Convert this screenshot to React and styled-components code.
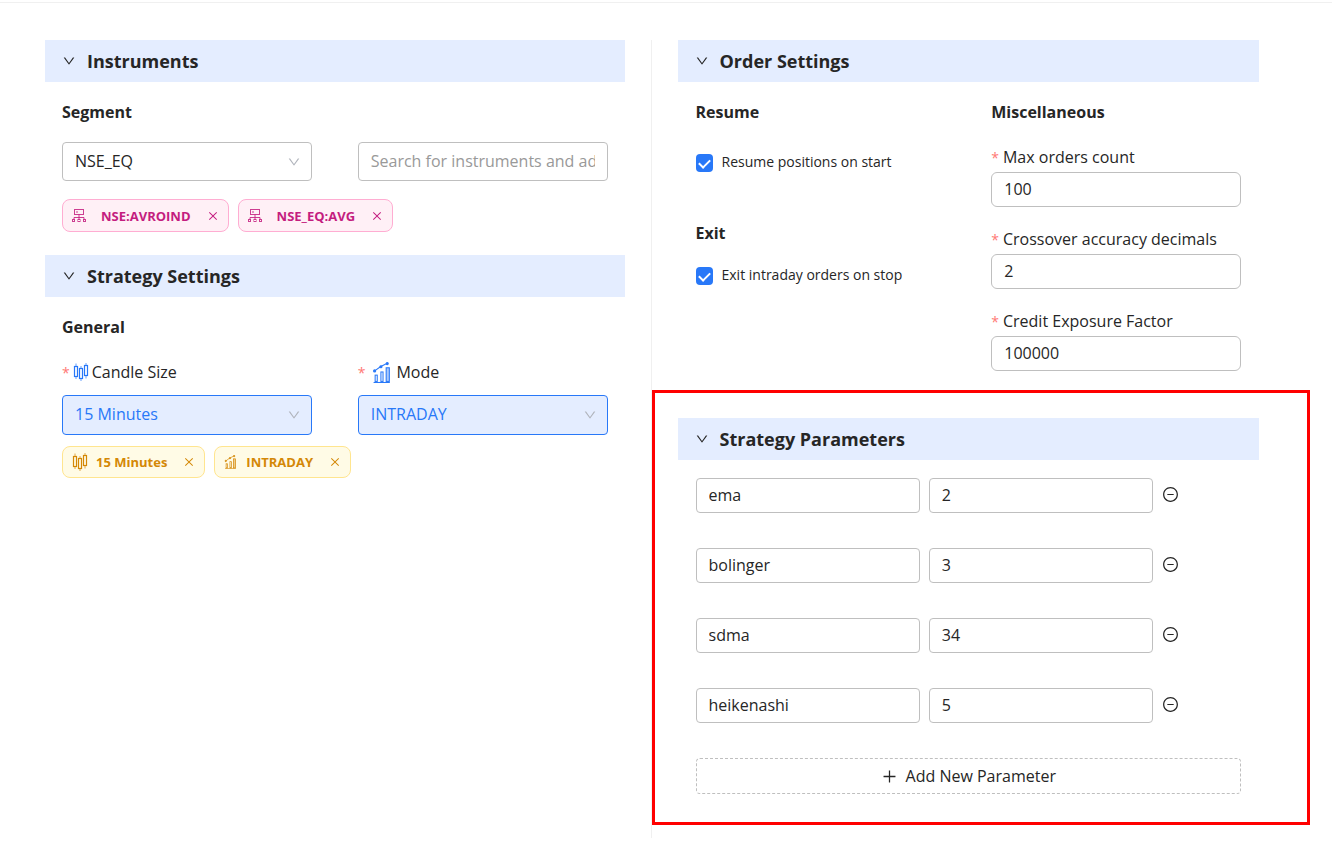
import React, { useState } from "react";
import styled, { createGlobalStyle } from "styled-components";
import {
  AiOutlineDown,
  AiOutlineClose,
  AiOutlineMinusCircle,
  AiOutlinePlus,
} from "react-icons/ai";

const GlobalStyle = createGlobalStyle`
  * {
    box-sizing: border-box;
  }

  body {
    margin: 0;
    background: #fff;
    color: #262626;
    font-family: "Open Sans", "Noto Sans", sans-serif;
    font-size: 16px;
  }

  input, select, button {
    font-family: inherit;
    color: inherit;
  }
`;

// candles
const CandleIcon = () => (
  <svg width="16" height="20" viewBox="0 0 16 20" fill="none" stroke="currentColor" aria-hidden="true">
    <rect x="1.5" y="4.5" width="3" height="10" strokeWidth="1.2" />
    <rect x="6.5" y="6.5" width="3" height="10" strokeWidth="1.2" />
    <rect x="11.5" y="3.5" width="3" height="10" strokeWidth="1.2" />
    <path d="M3 1.5v3M3 14.5v2.5M8 4v2.5M8 16.5v2.5M13 1v2.5M13 13.5v3" strokeOpacity="0.7" />
  </svg>
);

// growing bars with a trend line
const ChartIcon = ({ size = 21 }) => (
  <svg width={size} height={size} viewBox="0 0 20 20" fill="none" stroke="currentColor" aria-hidden="true">
    <rect x="3" y="12.5" width="2" height="6" />
    <rect x="8.5" y="9.5" width="2" height="9" />
    <rect x="13.5" y="5.5" width="3" height="13" fill="currentColor" fillOpacity="0.4" />
    <path d="M2.5 8.5L8 4.5L14 1.5" />
    <path d="M1.5 19.5h15.5" />
    <circle cx="2.5" cy="8.5" r="1" fill="currentColor" />
    <circle cx="8.5" cy="4.5" r="1" fill="currentColor" />
    <circle cx="14.5" cy="1.5" r="1" fill="currentColor" />
  </svg>
);

// exchange tree
const NetworkIcon = () => (
  <svg width="14" height="14" viewBox="0 0 14 14" fill="none" stroke="currentColor" strokeOpacity="0.85" aria-hidden="true">
    <rect x="2.5" y="0.5" width="9" height="5" />
    <path d="M4 3h2M7 5.5v5M2 10.5v-2h10v2" />
    <rect x="0.5" y="10.5" width="2" height="2" />
    <rect x="6" y="10.5" width="2" height="2" />
    <rect x="11.5" y="10.5" width="2" height="2" />
  </svg>
);

const Section = ({ title, children }) => (
  <section>
    <SectionHeader type="button">
      <AiOutlineDown size={14} />
      <h2>{title}</h2>
    </SectionHeader>
    {children}
  </section>
);

const Select = ({ id, options, active, ...rest }) => (
  <SelectBox $active={active}>
    <select id={id} {...rest}>
      {options.map((option) => (
        <option key={option}>{option}</option>
      ))}
    </select>
    <AiOutlineDown size={14} />
  </SelectBox>
);

const numberFields = [
  { id: "max-orders", label: "Max orders count", value: "100" },
  { id: "crossover", label: "Crossover accuracy decimals", value: "2" },
  { id: "exposure", label: "Credit Exposure Factor", value: "100000" },
];

const initialParameters = [
  { id: 1, name: "ema", value: "2" },
  { id: 2, name: "bolinger", value: "3" },
  { id: 3, name: "sdma", value: "34" },
  { id: 4, name: "heikenashi", value: "5" },
];

const App = () => {
  const [instruments, setInstruments] = useState(["NSE:AVROIND", "NSE_EQ:AVG"]);
  const [parameters, setParameters] = useState(initialParameters);

  const addParameter = () =>
    setParameters([...parameters, { id: Date.now(), name: "", value: "" }]);

  return (
    <>
      <GlobalStyle />
      <Page>
        <LeftColumn>
          <Section title="Instruments">
            <SectionBody>
              <SubTitle>Segment</SubTitle>
              <InstrumentGrid>
                <Select aria-label="Segment" options={["NSE_EQ", "NSE_FO"]} />
                <TextInput
                  $tall
                  type="text"
                  aria-label="Instruments"
                  placeholder="Search for instruments and add"
                />
              </InstrumentGrid>
              <TagRow>
                {instruments.map((name) => (
                  <Tag key={name} $pink>
                    <NetworkIcon />
                    <span>{name}</span>
                    <button
                      type="button"
                      aria-label={`Remove ${name}`}
                      onClick={() => setInstruments(instruments.filter((i) => i !== name))}
                    >
                      <AiOutlineClose size={12} />
                    </button>
                  </Tag>
                ))}
              </TagRow>
            </SectionBody>
          </Section>
          <Section title="Strategy Settings">
            <SectionBody>
              <SubTitle>General</SubTitle>
              <GeneralGrid>
                <div>
                  <IconLabel htmlFor="candle">
                    <Star>*</Star>
                    <CandleIcon />
                    Candle Size
                  </IconLabel>
                  <Select id="candle" active options={["15 Minutes", "30 Minutes"]} />
                </div>
                <div>
                  <IconLabel htmlFor="mode" $wide>
                    <Star>*</Star>
                    <ChartIcon />
                    Mode
                  </IconLabel>
                  <Select id="mode" active options={["INTRADAY", "DELIVERY"]} />
                </div>
              </GeneralGrid>
              <TagRow $near>
                <Tag>
                  <CandleIcon />
                  <span>15 Minutes</span>
                  <button type="button" aria-label="Remove 15 Minutes">
                    <AiOutlineClose size={12} />
                  </button>
                </Tag>
                <Tag>
                  <ChartIcon size={14} />
                  <span>INTRADAY</span>
                  <button type="button" aria-label="Remove INTRADAY">
                    <AiOutlineClose size={12} />
                  </button>
                </Tag>
              </TagRow>
            </SectionBody>
          </Section>
        </LeftColumn>

        <RightColumn>
          <OrderArea>
            <Section title="Order Settings">
              <OrderBody>
                <div>
                  <SubTitle>Resume</SubTitle>
                  <CheckLabel $first>
                    <Checkbox type="checkbox" defaultChecked />
                    <span>Resume positions on start</span>
                  </CheckLabel>
                  <SubTitle>Exit</SubTitle>
                  <CheckLabel>
                    <Checkbox type="checkbox" defaultChecked />
                    <span>Exit intraday orders on stop</span>
                  </CheckLabel>
                </div>
                <div>
                  <SubTitle>Miscellaneous</SubTitle>
                  <FieldList>
                    {numberFields.map((field) => (
                      <div key={field.id}>
                        <FieldLabel htmlFor={field.id}>
                          <Star>*</Star>
                          {field.label}
                        </FieldLabel>
                        <TextInput $round id={field.id} type="text" defaultValue={field.value} />
                      </div>
                    ))}
                  </FieldList>
                </div>
              </OrderBody>
            </Section>
          </OrderArea>
          <Highlight>
            <Section title="Strategy Parameters">
              <ParameterList>
                {parameters.map((param) => (
                  <ParameterRow key={param.id}>
                    <TextInput type="text" aria-label="Parameter name" defaultValue={param.name} />
                    <TextInput type="text" aria-label="Parameter value" defaultValue={param.value} />
                    <IconButton
                      type="button"
                      aria-label="Remove parameter"
                      onClick={() => setParameters(parameters.filter((p) => p.id !== param.id))}
                    >
                      <AiOutlineMinusCircle size={17} />
                    </IconButton>
                  </ParameterRow>
                ))}
                <AddButton type="button" onClick={addParameter}>
                  <AiOutlinePlus size={17} />
                  Add New Parameter
                </AddButton>
              </ParameterList>
            </Section>
          </Highlight>
        </RightColumn>
      </Page>
    </>
  );
};

export default App;

const Page = styled.main`
  display: grid;
  grid-template-columns: minmax(0, 1fr) minmax(0, 1fr);
  margin-top: 2px;
  border-top: 1px solid #f0f0f0;
  padding: 37px 22px 16px 45px;
`;

const LeftColumn = styled.div`
  display: flex;
  flex-direction: column;
  gap: 23px;
  padding-right: 26px;
  border-right: 1px solid #f0f0f0;
  margin-right: 26px;
`;

const RightColumn = styled.div`
  margin-left: -26px;
  padding-bottom: 13px;
`;

const OrderArea = styled.div`
  padding: 0 51px 0 26px;
`;

const Highlight = styled.div`
  margin-top: 19px;
  border: 3px solid #ff0000;
  padding: 25px 48px 28px 23px;
`;

const SectionHeader = styled.button`
  display: flex;
  align-items: center;
  gap: 11px;
  width: 100%;
  height: 42px;
  padding: 0 17px;
  border: none;
  background: #e4edff;
  text-align: left;

  h2 {
    margin: 0;
    font-size: 18px;
    line-height: 24px;
    font-weight: 700;
  }
`;

const SectionBody = styled.div`
  padding: 18px 17px 0;
`;

const SubTitle = styled.h3`
  margin: 0;
  font-size: 16px;
  line-height: 24px;
  font-weight: 700;
`;

const InstrumentGrid = styled.div`
  display: grid;
  grid-template-columns: 1fr 1fr;
  gap: 46px;
  margin-top: 18px;
`;

const GeneralGrid = styled(InstrumentGrid)`
  margin-top: 17px;
`;

const SelectBox = styled.div`
  position: relative;

  select {
    appearance: none;
    display: block;
    width: 100%;
    height: ${({ $active }) => ($active ? "40px" : "39px")};
    padding: 0 12px 2px;
    border: 1px solid ${({ $active }) => ($active ? "#2878f8" : "#bfbfbf")};
    border-radius: 4px;
    background: ${({ $active }) => ($active ? "#e4edff" : "#fff")};
    color: ${({ $active }) => ($active ? "#2878f8" : "#262626")};
    font-size: 16px;
  }

  svg {
    position: absolute;
    top: 13px;
    right: 11px;
    color: #b0b4bc;
    pointer-events: none;
  }
`;

const TextInput = styled.input`
  display: block;
  width: 100%;
  height: ${({ $tall }) => ($tall ? "39px" : "35px")};
  padding: 0 12px 2px;
  border: 1px solid #bfbfbf;
  border-radius: ${({ $round }) => ($round ? "6px" : "4px")};
  background: #fff;
  font-size: 16px;

  &::placeholder {
    color: #999;
  }
`;

const TagRow = styled.div`
  display: flex;
  flex-wrap: wrap;
  gap: 9px;
  margin-top: ${({ $near }) => ($near ? "11px" : "18px")};
`;

const Tag = styled.div`
  display: flex;
  align-items: center;
  height: ${({ $pink }) => ($pink ? "33px" : "32px")};
  padding: 0 9px;
  border: 1px solid ${({ $pink }) => ($pink ? "#ffadd2" : "#ffe58f")};
  border-radius: 8px;
  background: ${({ $pink }) => ($pink ? "#fff0f6" : "#fffbe6")};
  color: ${({ $pink }) => ($pink ? "#c41d7f" : "#d48806")};
  font-size: 13px;
  font-weight: 700;

  span {
    margin-left: ${({ $pink }) => ($pink ? "15px" : "8px")};
  }

  button {
    display: flex;
    margin-left: 16px;
    padding: 0;
    border: none;
    background: none;
  }
`;

const Star = styled.span`
  color: #ff7875;
  font-size: 14px;
`;

const FieldLabel = styled.label`
  display: flex;
  align-items: center;
  gap: 4px;
  height: 30px;
  font-size: 16px;
`;

const IconLabel = styled(FieldLabel)`
  height: 32px;
  margin-bottom: 7px;
  gap: 3px;

  svg {
    color: #2878f8;
    margin: ${({ $wide }) => ($wide ? "0 0 0 4px" : "0")};
  }
`;

const OrderBody = styled.div`
  display: grid;
  grid-template-columns: 1fr 1fr;
  gap: 46px;
  padding: 18px 18px 0;
`;

const CheckLabel = styled.label`
  display: flex;
  align-items: center;
  gap: 9px;
  height: 22px;
  margin: ${({ $first }) => ($first ? "28px 0 47px" : "20px 0 0")};
  font-size: 14px;

  span {
    padding-bottom: 3px;
  }
`;

const Checkbox = styled.input`
  appearance: none;
  width: 17px;
  height: 18px;
  margin: 0;
  border-radius: 4px;
  background: #2878f8;
  display: grid;
  place-items: center;

  &:checked::before {
    content: "";
    width: 5px;
    height: 9px;
    border: solid #fff;
    border-width: 0 2px 2px 0;
    transform: translateY(-1px) rotate(45deg);
  }
`;

const FieldList = styled.div`
  display: flex;
  flex-direction: column;
  gap: 17px;
  margin-top: 18px;
`;

const ParameterList = styled.div`
  display: flex;
  flex-direction: column;
  gap: 35px;
  padding: 18px 18px 0;
`;

const ParameterRow = styled.div`
  display: grid;
  grid-template-columns: 1fr 1fr 79px;
  gap: 9px;
`;

const IconButton = styled.button`
  display: flex;
  align-items: center;
  justify-self: start;
  padding: 0 0 2px;
  border: none;
  background: none;
`;

const AddButton = styled.button`
  display: flex;
  align-items: center;
  justify-content: center;
  gap: 8px;
  height: 36px;
  border: 1px dashed #bfbfbf;
  border-radius: 4px;
  background: #fff;
  font-size: 16px;
`;
